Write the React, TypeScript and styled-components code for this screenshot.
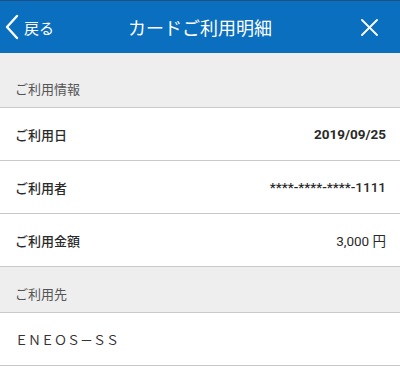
import React from "react";
import styled, { createGlobalStyle } from "styled-components";

const Global = createGlobalStyle`
  html, body { margin: 0; padding: 0; background: #ffffff; }
  body {
    font-family: Roboto, "Noto Sans CJK JP", "Noto Sans", sans-serif;
    -webkit-font-smoothing: antialiased;
  }
`;

const Page = styled.div`
  width: 400px;
  min-height: 367px;
  background: #ffffff;
  display: flex;
  flex-direction: column;
`;

const Header = styled.header`
  height: 53px;
  box-sizing: border-box;
  background: #0b6fc0;
  border-top: 1px solid #1d4f85;
  display: grid;
  grid-template-columns: 80px 1fr 80px;
  align-items: center;
  color: #ffffff;
`;

const BackButton = styled.div`
  display: flex;
  align-items: center;
  gap: 4px;
  padding-left: 4px;
  font-family: "Noto Sans CJK JP", sans-serif;
  font-size: 15px;
  line-height: 1;
`;

const Title = styled.h1`
  margin: 0;
  text-align: center;
  font-family: "Noto Sans CJK JP", sans-serif;
  font-weight: 400;
  font-size: 18px;
  line-height: 1;
`;

const CloseButton = styled.div`
  display: flex;
  justify-content: flex-end;
  padding-right: 22px;
`;

const SectionHeader = styled.div<{ $tall?: boolean }>`
  height: ${(p) => (p.$tall ? 55 : 46)}px;
  box-sizing: border-box;
  background: #eeeeee;
  border-bottom: 1px solid #c9c9c9;
  display: flex;
  align-items: flex-end;
  padding: 0 15px 10px;
  font-family: "Noto Sans CJK JP", sans-serif;
  font-size: 13px;
  line-height: 16px;
  color: #555555;
`;

const Row = styled.div`
  height: 53px;
  box-sizing: border-box;
  border-bottom: 1px solid #c9c9c9;
  display: flex;
  align-items: center;
  justify-content: space-between;
  padding: 0 14px 0 15px;
`;

const Label = styled.span`
  font-family: "Noto Sans CJK JP", sans-serif;
  font-size: 13px;
  font-weight: 500;
  color: #2a2a2a;
`;

const Value = styled.span<{ $weight: number }>`
  font-family: Roboto, "Noto Sans CJK JP", sans-serif;
  font-size: 13.5px;
  font-weight: ${(p) => p.$weight};
  color: #2a2a2a;
`;

const Plain = styled.span`
  font-family: "Noto Sans CJK JP", sans-serif;
  font-size: 13px;
  color: #333333;
`;

const details = [
  { label: "ご利用日", value: "2019/09/25", weight: 700 },
  { label: "ご利用者", value: "****-****-****-1111", weight: 500 },
  { label: "ご利用金額", value: "3,000 円", weight: 400 },
];

export default function App() {
  return (
    <Page>
      <Global />
      <Header>
        <BackButton>
          <svg width="16" height="26" viewBox="0 0 16 26">
            <polyline
              points="13,2 3,13 13,24"
              fill="none"
              stroke="#ffffff"
              strokeWidth="2.4"
              strokeLinecap="round"
              strokeLinejoin="round"
            />
          </svg>
          戻る
        </BackButton>
        <Title>カードご利用明細</Title>
        <CloseButton>
          <svg width="17" height="17" viewBox="0 0 17 17">
            <path d="M1 1 L16 16 M16 1 L1 16" stroke="#ffffff" strokeWidth="1.8" strokeLinecap="round" />
          </svg>
        </CloseButton>
      </Header>
      <SectionHeader $tall>ご利用情報</SectionHeader>
      {details.map((d) => (
        <Row key={d.label}>
          <Label>{d.label}</Label>
          <Value $weight={d.weight}>{d.value}</Value>
        </Row>
      ))}
      <SectionHeader>ご利用先</SectionHeader>
      <Row>
        <Plain>ＥＮＥＯＳ－ＳＳ</Plain>
      </Row>
    </Page>
  );
}
